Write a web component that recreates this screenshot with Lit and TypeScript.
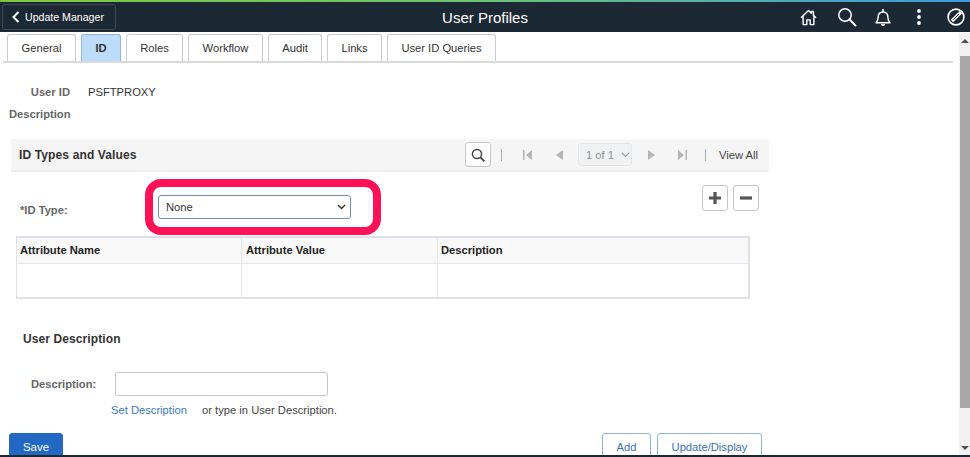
import { LitElement, html, css, svg } from 'lit';
import { customElement } from 'lit/decorators.js';

const TABS = [
  { label: 'General', width: 69 },
  { label: 'ID', width: 40 },
  { label: 'Roles', width: 57 },
  { label: 'Workflow', width: 75 },
  { label: 'Audit', width: 54 },
  { label: 'Links', width: 55 },
  { label: 'User ID Queries', width: 109 },
];

@customElement('app-root')
export class AppRoot extends LitElement {
  static styles = css`
    :host {
      display: flex;
      flex-direction: column;
      width: 970px;
      height: 457px;
      overflow: hidden;
      background: #fff;
      font-family: 'Liberation Sans', Arial, sans-serif;
      font-size: 11.2px;
      color: #333;
    }
    .strip {
      height: 2px;
      flex: none;
      background: linear-gradient(90deg, #7ec63c 0%, #6fc66a 45%, #3d9be0 100%);
    }
    .header {
      height: 30px;
      flex: none;
      display: grid;
      grid-template-columns: 1fr auto 1fr;
      align-items: center;
      background: #1d2835;
      box-sizing: border-box;
      padding: 0 5px 0 2px;
    }
    .back {
      width: 114px;
      height: 26px;
      box-sizing: border-box;
      border: 1px solid #3c4652;
      border-radius: 3px;
      display: flex;
      align-items: center;
      padding-left: 9px;
      gap: 5px;
      color: #fff;
      font-size: 10.6px;
    }
    .title {
      text-align: center;
      color: #fff;
      font-size: 15px;
      padding-left: 3px;
    }
    .icons {
      display: flex;
      align-items: center;
      justify-content: flex-end;
    }
    .icons svg { display: block; flex: none; }
    .home { margin-right: 20px; }
    .magnify { margin-right: 18px; }
    .bell { margin-right: 25px; }
    .dots { margin-right: 25px; }
    .body { flex: 1; min-height: 0; display: flex; }
    .main { flex: 1; min-width: 0; overflow: hidden; }
    .scrollbar {
      width: 11px;
      margin: 1px 0 0 0;
      flex: none;
      background: #f1f1f1;
      display: flex;
      flex-direction: column;
      align-items: center;
      justify-content: space-between;
    }
    .arrow-box { height: 23px; display: flex; align-items: center; justify-content: center; }
    .arrow-box.down { height: 47px; align-items: flex-end; padding-bottom: 5px; box-sizing: border-box; }
    .thumb { flex: 1; width: 10px; margin-left: 1px; background: #a8a8a8; }
    .tri-up { width: 0; height: 0; border: 4px solid transparent; border-top: 0; border-bottom: 4px solid #505050; margin-top: -8px; }
    .tri-down { width: 0; height: 0; border: 4px solid transparent; border-bottom: 0; border-top: 4px solid #505050; }
    .tabs {
      display: flex;
      margin: 2px 6px 0 3px;
      height: 27px;
      padding-left: 4px;
      border-bottom: 2px solid #d9d9d9;
      width: 946px;
    }
    .tab {
      height: 27px;
      box-sizing: border-box;
      border: 1px solid #c9ccd0;
      border-bottom: 0;
      border-radius: 3px 3px 0 0;
      margin-right: 5px;
      display: flex;
      align-items: center;
      justify-content: center;
      color: #333;
      background: #fff;
    }
    .tab.active {
      background: #bcdcfa;
      border-color: #8fb8e0;
      font-weight: bold;
    }
    .summary {
      display: grid;
      grid-template-columns: 61px auto;
      column-gap: 18px;
      margin: 22px 0 0 9px;
      row-gap: 7px;
      align-items: center;
      line-height: 15px;
    }
    .lbl { font-weight: bold; color: #666; text-align: right; }
    .section-head {
      margin: 17px 0 0 11px;
      width: 758px;
      height: 33px;
      box-sizing: border-box;
      background: #f5f5f5;
      border-bottom: 2px solid #eeeeee;
      display: flex;
      align-items: center;
      padding: 0 11px 0 8px;
      color: #333;
    }
    .section-head .name { font-weight: bold; font-size: 12px; letter-spacing: 0.13px; flex: 1; }
    .btn-icon {
      box-sizing: border-box;
      background: #fff;
      border: 1px solid #c6c6c6;
      border-radius: 3px;
      display: flex;
      align-items: center;
      justify-content: center;
      flex: none;
    }
    .search { width: 26px; height: 25px; margin-right: 10px; }
    .pipe { width: 1px; height: 12px; background: #aaa; flex: none; }
    .nav { display: flex; align-items: center; margin-left: 21px; }
    .nav svg { display: block; flex: none; }
    .first { margin-right: 24px; }
    .next { margin-right: 23px; }
    .last { margin-right: 18px; }
    .pager {
      width: 54px;
      height: 23px;
      box-sizing: border-box;
      background: #f0f1f2;
      border: 1px solid #e6e6e6;
      border-radius: 3px;
      color: #8f8f8f;
      display: flex;
      align-items: center;
      padding-left: 7px;
      gap: 7px;
      margin: 0 16px 0 15px;
      flex: none;
    }
    .view-all { color: #444; margin-left: 13px; }
    .type-row { display: flex; height: 64px; position: relative; }
    .type-label { font-weight: bold; color: #666; margin: 31px 0 0 20px; width: 138px; line-height: 15px; }
    .select {
      margin-top: 23px;
      width: 193px;
      height: 24px;
      box-sizing: border-box;
      border: 1px solid #6c8fb8;
      border-radius: 3px;
      display: flex;
      align-items: center;
      justify-content: space-between;
      padding: 0 4px 0 7px;
      color: #333;
      background: #fff;
    }
    .add-del { display: flex; gap: 5px; margin: 13px 0 0 351px; }
    .add-del .btn-icon { width: 26px; height: 26px; }
    .highlight {
      position: absolute;
      left: 145px;
      top: 7px;
      width: 236px;
      height: 56px;
      box-sizing: border-box;
      border: 8px solid #ff1158;
      border-radius: 16px;
      pointer-events: none;
    }
    .grid {
      margin-left: 16px;
      width: 734px;
      box-sizing: border-box;
      border: 1px solid #dde1e6;
      border-width: 2px 2px 2px 1px;
      display: grid;
      grid-template-columns: 225px 196px 1fr;
      grid-template-rows: 26px 33px;
    }
    .grid > div { border-right: 1px solid #e6e8eb; box-sizing: border-box; }
    .grid > div:nth-child(3n) { border-right: 0; }
    .grid .th {
      background: #f8f8f8;
      border-bottom: 1px solid #e6e8eb;
      font-weight: bold;
      color: #222;
      padding-left: 3px;
      line-height: 25px;
    }
    .grid .th:nth-child(2) { padding-left: 4px; }
    .sub-title {
      margin: 33px 0 0 23px;
      font-weight: bold;
      font-size: 12px;
      color: #333;
      letter-spacing: 0.1px;
      line-height: 15px;
    }
    .desc-row { display: flex; align-items: center; margin: 25px 0 0 31px; }
    .desc-row .lbl { width: 84px; text-align: left; }
    .input {
      width: 213px;
      height: 24px;
      box-sizing: border-box;
      border: 1px solid #c6c6c6;
      border-radius: 3px;
      background: #fff;
    }
    .hint { display: flex; margin: 7px 0 0 111px; line-height: 15px; color: #444; }
    .hint a { color: #3a78c9; width: 91px; }
    .actions { display: flex; margin: 15px 0 0 9px; }
    .btn {
      height: 30px;
      box-sizing: border-box;
      border-radius: 3px;
      display: flex;
      justify-content: center;
      padding-top: 6px;
      line-height: 14px;
      flex: none;
    }
    .save { width: 54px; background: #2369c4; border: 1px solid #2369c4; color: #fff; margin-right: 539px; font-size: 11.5px; }
    .ghost { border: 1px solid #8fb3dc; background: #fff; color: #3a6fb8; }
    .add { width: 49px; margin-right: 6px; }
    .update { width: 105px; }
    .footer { height: 2px; flex: none; background: #1d2835; }
  `;

  private iconBtn(path: unknown) {
    return html`<svg width="16" height="16" viewBox="0 0 16 16">${path}</svg>`;
  }

  render() {
    return html`
      <div class="strip"></div>
      <div class="header">
        <div class="back">
          <svg width="8" height="12" viewBox="0 0 8 12"><path d="M6.5 1 1.5 6l5 5" fill="none" stroke="#fff" stroke-width="2"/></svg>
          <span>Update Manager</span>
        </div>
        <div class="title">User Profiles</div>
        <div class="icons">
          <svg class="home" width="17" height="17" viewBox="0 0 18 18">
            <path d="M1 9.2 9 1.6l3 2.9V2.6h2.2v4L17 9.2M3.3 7.8v8.7h3.9v-5h3.6v5h3.9V7.8" fill="none" stroke="#fff" stroke-width="1.5" stroke-linejoin="round"/>
          </svg>
          <svg class="magnify" width="20" height="20" viewBox="0 0 20 20">
            <circle cx="8" cy="8" r="6.2" fill="none" stroke="#fff" stroke-width="1.5"/>
            <path d="m12.5 12.5 6 6" stroke="#fff" stroke-width="1.9" stroke-linecap="round"/>
          </svg>
          <svg class="bell" width="16" height="19" viewBox="0 0 16 19">
            <path d="M1 14.8c1.5-1.4 2.1-2.6 2.1-5.2 0-3.3 1.8-5.6 4.9-5.6s4.9 2.3 4.9 5.6c0 2.6.6 3.8 2.1 5.2z" fill="none" stroke="#fff" stroke-width="1.4" stroke-linejoin="round"/>
            <path d="M8 1v3" stroke="#fff" stroke-width="1.6"/>
            <path d="M6 16h4a2 2 0 0 1-4 0z" fill="#fff"/>
          </svg>
          <svg class="dots" width="6" height="16" viewBox="0 0 6 16">
            <circle cx="3" cy="2" r="1.9" fill="#fff"/><circle cx="3" cy="8" r="1.9" fill="#fff"/><circle cx="3" cy="14" r="1.9" fill="#fff"/>
          </svg>
          <svg width="18" height="18" viewBox="0 0 18 18">
            <circle cx="9" cy="9" r="7.9" fill="none" stroke="#fff" stroke-width="1.6"/>
            <path d="M14 4 5 13" stroke="#fff" stroke-width="3.4"/>
            <path d="M12 6 6 12" stroke="#1d2835" stroke-width="1"/>
          </svg>
        </div>
      </div>
      <div class="body">
        <div class="main">
          <div class="tabs">
            ${TABS.map(
              (t) => html`<div class="tab ${t.label === 'ID' ? 'active' : ''}" style="width:${t.width}px">${t.label}</div>`
            )}
          </div>
          <div class="summary">
            <div class="lbl">User ID</div><div>PSFTPROXY</div>
            <div class="lbl">Description</div><div></div>
          </div>
          <div class="section-head">
            <div class="name">ID Types and Values</div>
            <div class="btn-icon search">
              ${this.iconBtn(svg`<circle cx="7" cy="7" r="4.6" fill="none" stroke="#444" stroke-width="1.5"/><path d="m10.4 10.4 4 4" stroke="#444" stroke-width="1.8"/>`)}
            </div>
            <div class="pipe"></div>
            <div class="nav">
              <svg class="first" width="9" height="10" viewBox="0 0 9 10"><path d="M0 0h1.5v10H0zM9 0v10L3 5z" fill="#b5b5b5"/></svg>
              <svg width="7" height="10" viewBox="0 0 7 10"><path d="M7 0v10L0 5z" fill="#b5b5b5"/></svg>
              <div class="pager">
                <span>1 of 1</span>
                <svg width="9" height="6" viewBox="0 0 9 6"><path d="m1 1 3.5 3.5L8 1" fill="none" stroke="#9a9a9a" stroke-width="1.1"/></svg>
              </div>
              <svg class="next" width="7" height="10" viewBox="0 0 7 10"><path d="M0 0v10l7-5z" fill="#b5b5b5"/></svg>
              <svg class="last" width="9" height="10" viewBox="0 0 9 10"><path d="M0 0v10l6-5zM7.5 0H9v10H7.5z" fill="#b5b5b5"/></svg>
            </div>
            <div class="pipe"></div>
            <div class="view-all">View All</div>
          </div>
          <div class="type-row">
            <div class="type-label">*ID Type:</div>
            <div class="select">
              <span>None</span>
              <svg width="9" height="6" viewBox="0 0 9 6"><path d="m1 1 3.5 3.5L8 1" fill="none" stroke="#333" stroke-width="1.5"/></svg>
            </div>
            <div class="add-del">
              <div class="btn-icon">
                ${this.iconBtn(svg`<path d="M8 2v12M2 8h12" stroke="#555" stroke-width="3.2"/>`)}
              </div>
              <div class="btn-icon">
                ${this.iconBtn(svg`<path d="M2 8h12" stroke="#555" stroke-width="3.2"/>`)}
              </div>
            </div>
            <div class="highlight"></div>
          </div>
          <div class="grid">
            <div class="th">Attribute Name</div>
            <div class="th">Attribute Value</div>
            <div class="th">Description</div>
            <div></div><div></div><div></div>
          </div>
          <div class="sub-title">User Description</div>
          <div class="desc-row">
            <div class="lbl">Description:</div>
            <div class="input"></div>
          </div>
          <div class="hint"><a>Set Description</a><span>or type in User Description.</span></div>
          <div class="actions">
            <div class="btn save">Save</div>
            <div class="btn ghost add">Add</div>
            <div class="btn ghost update">Update/Display</div>
          </div>
        </div>
        <div class="scrollbar">
          <div class="arrow-box"><div class="tri-up"></div></div>
          <div class="thumb"></div>
          <div class="arrow-box down"><div class="tri-down"></div></div>
        </div>
      </div>
      <div class="footer"></div>
    `;
  }
}
